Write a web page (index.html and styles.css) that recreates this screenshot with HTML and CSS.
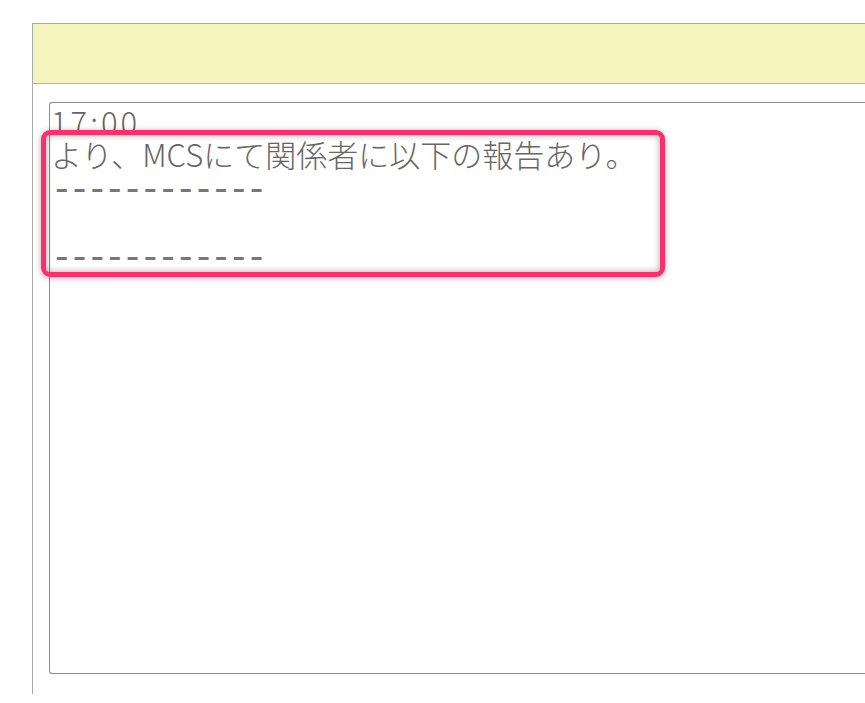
FILE: index.html
```html
<!DOCTYPE html>
<html lang="ja">
<head>
    <meta charset="UTF-8">
    <meta name="viewport" content="width=device-width, initial-scale=1.0">
    <title>報告メモ</title>
    <link rel="stylesheet" href="styles.css">
</head>
<body>
    <div class="panel">
        <div class="panel-head"></div>

        <div class="memo">
            <div class="line time">17:00</div>
            <div class="line">より、MCSにて関係者に以下の報告あり。</div>
            <div class="line dash">------------</div>
            <div class="line"></div>
            <div class="line dash">------------</div>

            <!-- annotation box over the report lines -->
            <div class="highlight"></div>
        </div>
    </div>
</body>
</html>
```

FILE: styles.css
```css
* {
    margin: 0;
    padding: 0;
    box-sizing: border-box;
}

body {
    background: #ffffff;
    overflow: hidden;
    font-family: "Noto Sans CJK JP", "Noto Sans", sans-serif;
}

.panel {
    margin: 23px 0 0 32px;
    width: calc(100vw - 32px);
    height: 671px;
    border-top: 1px solid #aaaaaa;
    border-left: 1px solid #aaaaaa;
}

.panel-head {
    height: 60px;
    background: #f6f4bd;
    border-bottom: 1px solid #b2b2b2;
}

.memo {
    position: relative;
    margin: 18px 0 0 16px;
    width: calc(100% - 16px);
    height: 572px;
    border: 1px solid #8c8c8c;
    border-right: none;
    border-radius: 3px 0 0 3px;
    padding-left: 1px;
    color: #666666;
}

.line {
    height: 34px;
    line-height: 34px;
    font-size: 31px;
    font-weight: 300;
    white-space: pre;
}

.time {
    letter-spacing: 3px;
    line-height: 38px;
}

.dash {
    font-family: "Liberation Mono", "DejaVu Sans Mono", monospace;
    font-size: 36px;
    letter-spacing: -3.9px;
    line-height: 40px;
    font-weight: normal;
    color: #777777;
}

.highlight {
    position: absolute;
    left: -9px;
    top: 27px;
    width: 624px;
    height: 147px;
    border: 5px solid #fc2e6b;
    border-radius: 9px;
    box-shadow: 0 1px 6px rgba(0, 0, 0, 0.3), inset 0 0 7px rgba(0, 0, 0, 0.35);
}
```
